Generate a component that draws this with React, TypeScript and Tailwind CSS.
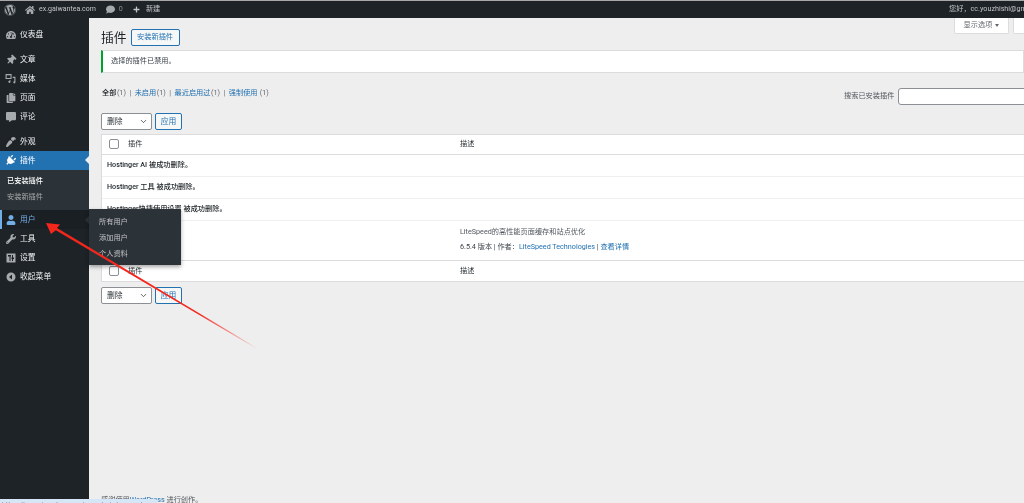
import { FaWordpress, FaHome, FaComment, FaPlus, FaThumbtack, FaCopy, FaCommentAlt, FaUser, FaWrench, FaPlug, FaTachometerAlt, FaPaintBrush } from "react-icons/fa";
import { ChevronDown } from "lucide-react";

const SettingsIcon = () => (
  <svg viewBox="0 0 20 20" className="w-[10px] h-[10px]" fill="currentColor">
    <path d="M1 1h18v18H1zM4 4v3h3v9h2V7h1V4zM12 4v5h-1v3h1v4h2v-4h2V9h-2V4z" fillRule="evenodd" />
  </svg>
);

const CollapseIcon = () => (
  <svg viewBox="0 0 20 20" className="w-[10px] h-[10px]" fill="currentColor">
    <path d="M10 1a9 9 0 1 0 0 18 9 9 0 0 0 0-18zm2 4v10L6 10z" fillRule="evenodd" />
  </svg>
);

const MediaIcon = () => (
  <svg viewBox="0 0 20 20" className="w-[11px] h-[11px]" fill="currentColor">
    <path d="M1 2h11v9H1zM3 4v5h7V4zM14 7h5v10a2 2 0 1 1-2-2V9h-3zM10 13v3a2 2 0 1 1-2-2v-1z" fillRule="evenodd" />
  </svg>
);

const menuTop = [
  { icon: <FaThumbtack className="rotate-45" />, label: "文章" },
  { icon: <MediaIcon />, label: "媒体" },
  { icon: <FaCopy />, label: "页面" },
  { icon: <FaCommentAlt />, label: "评论" },
];

const menuBottom = [
  { icon: <FaWrench />, label: "工具" },
  { icon: <SettingsIcon />, label: "设置" },
  { icon: <CollapseIcon />, label: "收起菜单" },
];

const tabs = [
  { label: "全部", count: "(1)", current: true },
  { label: "未启用", count: "(1)" },
  { label: "最近启用过", count: "(1)" },
  { label: "强制使用", count: " (1)" },
];

const MenuRow = ({ icon, label }: { icon: React.ReactNode; label: string }) => (
  <div className="flex items-center h-[19px] pl-[5px] text-[#f0f0f1]">
    <span className="w-[11px] flex justify-center text-[10px] text-[#a7aaad]">{icon}</span>
    <span className="ml-[4px] text-[7.8px]">{label}</span>
  </div>
);

const BulkActions = () => (
  <div className="flex gap-[3px]">
    <div className="w-[51px] h-[17px] bg-white border border-[#8c8f94] rounded-[2px] flex items-center justify-between pl-[5px] pr-[3px] text-[7.8px] text-[#2c3338]">
      删除
      <ChevronDown className="w-[9px] h-[9px]" strokeWidth={2} />
    </div>
    <div className="w-[27px] h-[17px] bg-[#f6f7f7] border border-[#2271b1] rounded-[2px] flex items-center justify-center text-[7.8px] text-[#2271b1]">
      应用
    </div>
  </div>
);

const Checkbox = () => <div className="w-[10px] h-[10px] bg-white border border-[#8c8f94] rounded-[2px]" />;

const HeadRow = ({ tall }: { tall?: boolean }) => (
  <div className={tall ? "flex items-center h-[20px] text-[7.2px] text-[#2c3338]" : "flex items-center h-[19px] text-[7.2px] text-[#2c3338]"}>
    <div className="w-[358px] flex items-center pl-[7px] gap-[9px]">
      <Checkbox />
      插件
    </div>
    <div>描述</div>
  </div>
);

const MessageRow = ({ children }: { children: React.ReactNode }) => (
  <div className="flex items-center h-[22px] pl-[5px] border-b border-[#f0f0f1] text-[7.2px] font-medium text-[#1d2327]">
    {children}
  </div>
);

export default function App() {
  return (
    <div className="relative w-[1024px] h-[503px] overflow-hidden bg-[#eeeeee] font-['Roboto','Noto_Sans_CJK_SC',sans-serif] blur-[0.4px]">
      <div className="flex flex-col h-[503px]">
        {/* Admin bar */}
        <header className="shrink-0 h-[18px] border-t border-[#a8a8a8] bg-[#1d2327] flex items-center justify-between text-[7.2px] text-[#c3c4c7]">
          <div className="flex items-center">
            <FaWordpress className="ml-[4px] w-[12px] h-[12px] text-[#a7aaad]" />
            <FaHome className="ml-[9px] w-[10px] h-[10px] text-[#a7aaad]" />
            <span className="ml-[4px] text-[7px]">ex.gaiwantea.com</span>
            <FaComment className="ml-[10px] w-[9px] h-[9px] text-[#a7aaad]" />
            <span className="ml-[4px] text-[#8c8f94]">0</span>
            <FaPlus className="ml-[10px] w-[7px] h-[7px] text-[#c3c4c7]" />
            <span className="ml-[6px]">新建</span>
          </div>
          <div className="w-[75px] whitespace-nowrap overflow-hidden">您好，cc.youzhishi@gmail.com</div>
        </header>

        <div className="flex flex-1 min-h-0">
          {/* Sidebar */}
          <aside className="relative w-[89px] shrink-0 bg-[#1d2327] pt-[7px] text-[7.8px]">
            <MenuRow icon={<FaTachometerAlt />} label="仪表盘" />
            <div className="h-[6px]" />
            {menuTop.map((m) => (
              <MenuRow key={m.label} icon={m.icon} label={m.label} />
            ))}
            <div className="h-[6px]" />
            <MenuRow icon={<FaPaintBrush className="rotate-180" />} label="外观" />
            <div className="relative flex items-center h-[19px] pl-[5px] bg-[#2271b1] text-white">
              <span className="w-[11px] flex justify-center">
                <FaPlug className="w-[11px] h-[11px] rotate-45" />
              </span>
              <span className="ml-[4px]">插件</span>
              <span className="absolute right-0 top-[5px] border-y-[4px] border-r-[4px] border-y-transparent border-r-[#eeeeee]" />
            </div>
            <div className="bg-[#2c3338] h-[40px] pt-[3px] pl-[7px] text-[7.2px]">
              <div className="h-[16px] leading-[16px] font-medium text-white">已安装插件</div>
              <div className="h-[16px] leading-[16px] text-[#a7aaad]">安装新插件</div>
            </div>
            <div className="relative flex items-center h-[19px] pl-[3px] bg-[#1a1f23] border-l-2 border-[#72aee6] text-[#72aee6]">
              <span className="w-[11px] flex justify-center">
                <FaUser className="w-[10px] h-[10px]" />
              </span>
              <span className="ml-[4px]">用户</span>
              <span className="absolute right-0 top-[6px] border-y-[4px] border-r-[4px] border-y-transparent border-r-[#2c3338]" />
            </div>
            {menuBottom.map((m) => (
              <MenuRow key={m.label} icon={m.icon} label={m.label} />
            ))}
            {/* Flyout */}
            <div className="absolute left-[89px] top-[191px] z-10 w-[92px] h-[56px] bg-[#2c3338] pt-[5px] pl-[10px] text-[7.2px] text-[#c3c4c7] shadow-[0_2px_4px_rgba(0,0,0,0.35)]">
              <div className="h-[16px] leading-[16px]">所有用户</div>
              <div className="h-[16px] leading-[16px]">添加用户</div>
              <div className="h-[16px] leading-[16px]">个人资料</div>
            </div>
          </aside>

          {/* Content */}
          <main className="flex-1 min-w-0 flex flex-col pl-[12px] overflow-hidden">
            <div className="relative shrink-0 flex items-center h-[32px] pt-[7px] gap-[4px]">
              <h1 className="text-[12.8px] text-[#1d2327]">插件</h1>
              <div className="h-[17px] w-[49px] flex items-center justify-center bg-[#f6f7f7] border border-[#2271b1] rounded-[2px] text-[7.2px] text-[#2271b1]">
                安装新插件
              </div>
              <div className="absolute right-[15px] top-0 w-[55px] h-[16px] flex items-center justify-center gap-[3px] bg-white border border-[#dcdcde] border-t-0 rounded-b-[2px] text-[7.2px] text-[#646970]">
                显示选项
                <span className="border-x-[2.5px] border-t-[3px] border-x-transparent border-t-[#646970]" />
              </div>
              <div className="absolute -right-[4px] top-0 w-[15px] h-[16px] bg-white border border-[#dcdcde] border-t-0 rounded-b-[2px]" />
            </div>

            <div className="shrink-0 h-[23px] flex items-center pl-[8px] bg-white border border-[#dcdcde] border-l-2 border-l-[#00a32a] text-[7.2px] text-[#3c434a]">
              选择的插件已禁用。
            </div>

            <div className="relative shrink-0 mt-[12px] h-[17px] pl-[1px] flex items-center text-[7.2px] text-[#646970] whitespace-pre">
              {tabs.map((t, i) => (
                <span key={t.label} className="flex items-center">
                  {i > 0 && <span className="mx-[3.5px]">|</span>}
                  <span className={t.current ? "font-medium text-[#1d2327]" : "text-[#2271b1]"}>{t.label}</span>
                  <span className="ml-[0.5px]">{t.count}</span>
                </span>
              ))}
              <div className="absolute left-[743px] top-[3px] flex items-center gap-[4px] text-[#50575e]">
                搜索已安装插件
                <div className="w-[140px] h-[17px] bg-white border border-[#8c8f94] rounded-[3px]" />
              </div>
            </div>

            <div className="shrink-0 mt-[11px]">
              <BulkActions />
            </div>

            <div className="shrink-0 mt-[4px] w-[940px] bg-white border-y border-[#dcdcde] border-l">
              <div className="border-b border-[#dcdcde]">
                <HeadRow />
              </div>
              <MessageRow>Hostinger AI 被成功删除。</MessageRow>
              <MessageRow>Hostinger 工具 被成功删除。</MessageRow>
              <MessageRow>Hostinger快捷使用设置 被成功删除。</MessageRow>
              <div className="flex h-[40px] border-b border-[#dcdcde] text-[7.2px] text-[#50575e]">
                <div className="w-[358px] pl-[5px] pt-[6px] font-medium">LiteSpeed Cache</div>
                <div className="pt-[3px]">
                  <div className="h-[15px] leading-[15px]">LiteSpeed的高性能页面缓存和站点优化</div>
                  <div className="h-[15px] leading-[15px] text-[#3c434a]">
                    6.5.4 版本 | 作者：<span className="text-[#2271b1]">LiteSpeed Technologies</span> | <span className="text-[#2271b1]">查看详情</span>
                  </div>
                </div>
              </div>
              <HeadRow tall />
            </div>

            <div className="shrink-0 mt-[5px]">
              <BulkActions />
            </div>

            <div className="mt-auto h-[8px] overflow-hidden text-[7.2px] leading-[10px] text-[#50575e] whitespace-pre">
              感谢使用<span className="text-[#2271b1]">WordPress</span> 进行创作。
            </div>
          </main>
        </div>
      </div>

      {/* Browser status bubble */}
      <div className="absolute left-0 bottom-0 z-20 w-[157px] h-[4px] overflow-hidden rounded-tr-[2px] bg-[#d5e6f7] pl-[2px] text-[7px] leading-[13px] text-[#7b8794] whitespace-nowrap">
        https://ex.gaiwantea.com/wp-admin/users.php
      </div>

      {/* Annotation arrow */}
      <svg className="absolute inset-0 z-20 pointer-events-none" width="1024" height="503" viewBox="0 0 1024 503">
        <defs>
          <linearGradient id="arrowFade" gradientUnits="userSpaceOnUse" x1="46" y1="223" x2="258" y2="349">
            <stop offset="0" stopColor="#f5261c" />
            <stop offset="0.72" stopColor="#f5261c" />
            <stop offset="1" stopColor="#f5261c" stopOpacity="0" />
          </linearGradient>
        </defs>
        <polygon points="46,223 60,224.5 57,228 258.3,348.6 257.7,349.4 55.8,230.2 51,234" fill="url(#arrowFade)" />
      </svg>
    </div>
  );
}
